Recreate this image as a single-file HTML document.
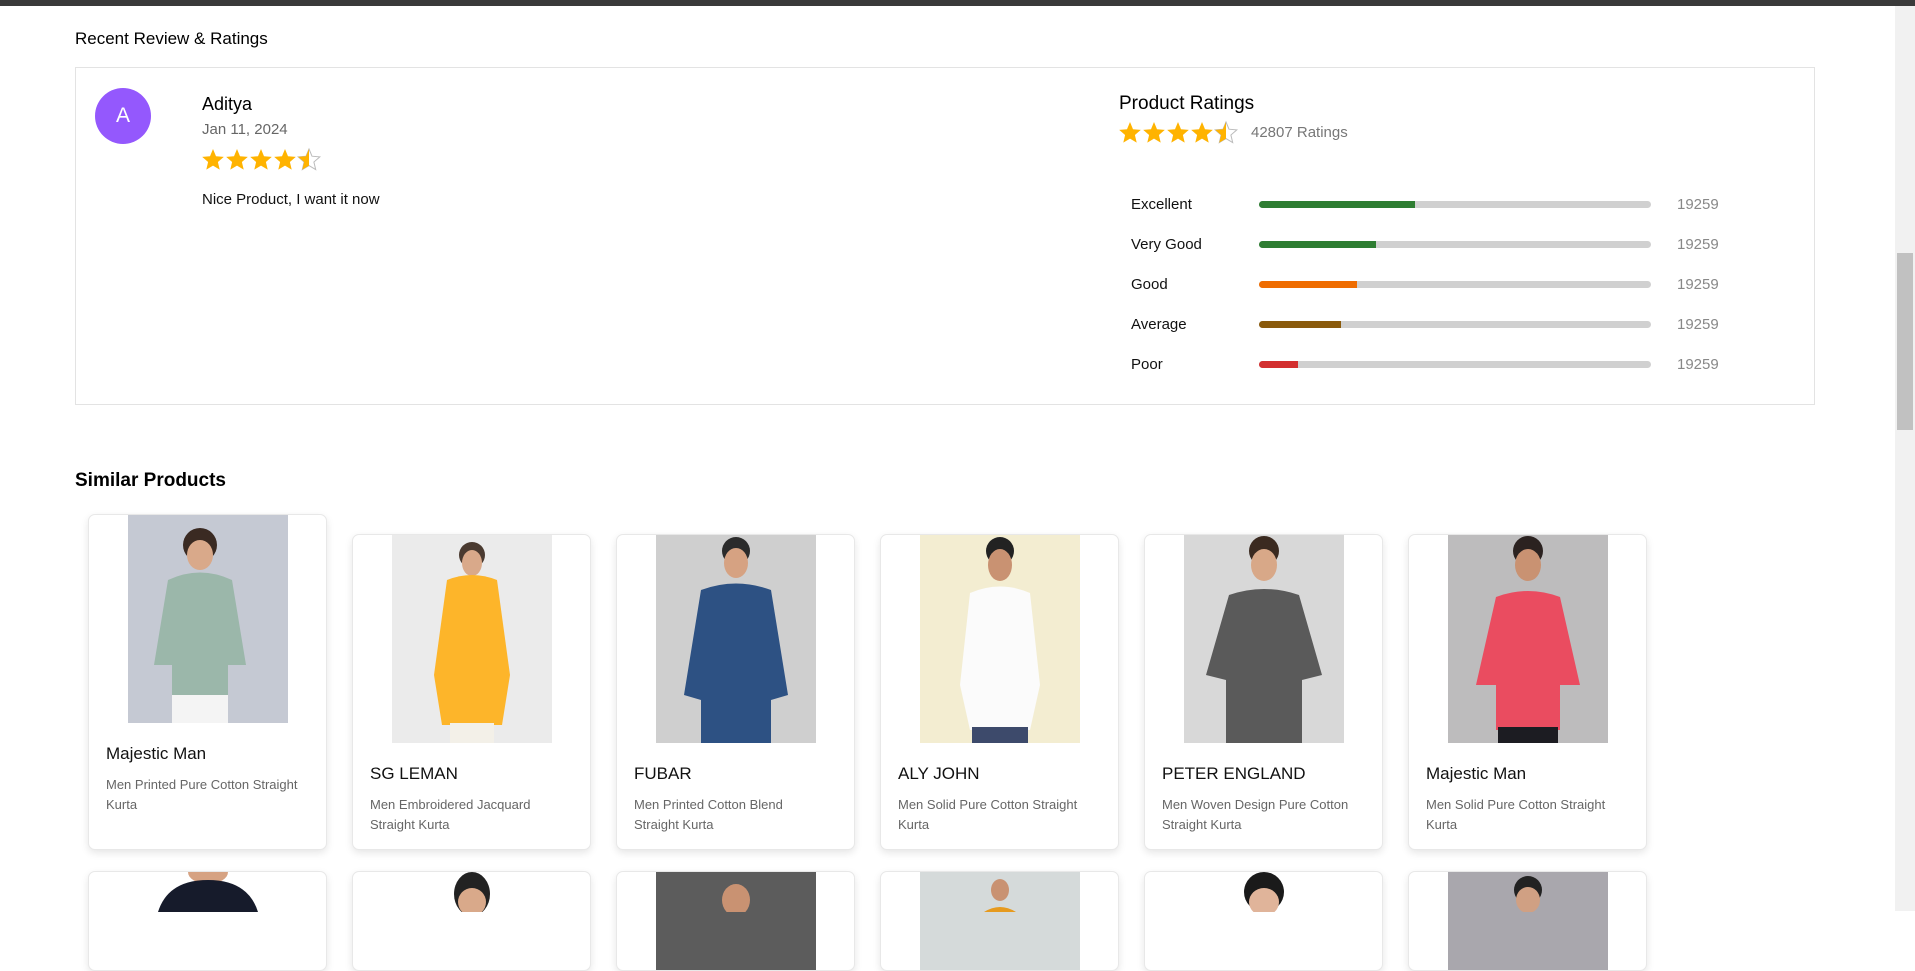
<!DOCTYPE html>
<html><head><meta charset="utf-8">
<style>
*{box-sizing:border-box;margin:0;padding:0}
html,body{width:1915px;height:911px;overflow:hidden;background:#fff;font-family:"Liberation Sans","DejaVu Sans",sans-serif;color:#111}
.topbar{position:absolute;left:0;top:0;width:1915px;height:6px;background:#3a3a3a}
.scroll{position:absolute;right:0;top:6px;width:20px;height:905px;background:#f1f1f1}
.thumb{position:absolute;right:2px;top:247px;width:16px;height:177px;background:#c1c1c1}
.abs{position:absolute;white-space:nowrap}
.box{position:absolute;left:75px;top:67px;width:1740px;height:338px;border:1px solid #e3e3e3}
.avatar{position:absolute;left:95px;top:88px;width:56px;height:56px;border-radius:50%;background:#9458fd;color:#fff;font-size:21px;display:flex;align-items:center;justify-content:center}
.bar{position:absolute;left:1259px;width:392px;height:7px;border-radius:4px;background:#d0d0d0;overflow:hidden}
.bar i{display:block;height:100%}
.lbl{position:absolute;left:1131px;font-size:15px;color:#111}
.cnt{position:absolute;left:1677px;font-size:15px;color:#888}
.card{position:absolute;width:239px;border:1px solid #e8e8e8;border-radius:7px;background:#fff;box-shadow:0 3px 8px rgba(0,0,0,.1);overflow:hidden}
.img{position:absolute;left:39px;top:0;width:160px;height:208px;overflow:hidden}
.brand{position:absolute;left:17px;font-size:17px;color:#111}
.desc{position:absolute;left:17px;width:225px;font-size:13px;line-height:20px;color:#666;white-space:nowrap}
</style></head><body>
<div class="topbar"></div>
<div class="scroll"><div class="thumb"></div></div>

<div class="abs" style="left:75px;top:29px;font-size:17px;color:#000">Recent Review &amp; Ratings</div>
<div class="box"></div>
<div class="avatar">A</div>
<div class="abs" style="left:202px;top:94px;font-size:18px;color:#000">Aditya</div>
<div class="abs" style="left:202px;top:121px;font-size:15px;color:#666">Jan 11, 2024</div>
<div class="abs" style="left:202px;top:147px;">
<svg width="120" height="26" viewBox="0 0 120 26">
<defs><path id="s" d="M11 1l3 7.2 7.8.7-5.9 5.1 1.8 7.6L11 17.6 4.3 21.6 6.1 14 .2 8.9 8 8.2z"/>
<clipPath id="h"><rect x="0" y="0" width="11" height="26"/></clipPath></defs>
<use href="#s" x="0" y="1" fill="#ffb300"/><use href="#s" x="24" y="1" fill="#ffb300"/><use href="#s" x="48" y="1" fill="#ffb300"/><use href="#s" x="72" y="1" fill="#ffb300"/>
<g transform="translate(96,1)"><use href="#s" fill="none" stroke="#bbb" stroke-width="1"/><use href="#s" fill="#ffb300" clip-path="url(#h)"/></g>
</svg></div>
<div class="abs" style="left:202px;top:191px;font-size:15px;">Nice Product, I want it now</div>

<div class="abs" style="left:1119px;top:93px;font-size:19px;color:#000">Product Ratings</div>
<div class="abs" style="left:1119px;top:120px;">
<svg width="120" height="26" viewBox="0 0 120 26">
<use href="#s" x="0" y="1" fill="#ffb300"/><use href="#s" x="24" y="1" fill="#ffb300"/><use href="#s" x="48" y="1" fill="#ffb300"/><use href="#s" x="72" y="1" fill="#ffb300"/>
<g transform="translate(96,1)"><use href="#s" fill="none" stroke="#bbb" stroke-width="1"/><use href="#s" fill="#ffb300" clip-path="url(#h)"/></g>
</svg></div>
<div class="abs" style="left:1251px;top:124px;font-size:15px;color:#777">42807 Ratings</div>

<div class="lbl" style="top:196px">Excellent</div><div class="bar" style="top:201px"><i style="width:156px;background:#2e7d32"></i></div><div class="cnt" style="top:196px">19259</div>
<div class="lbl" style="top:236px">Very Good</div><div class="bar" style="top:241px"><i style="width:117px;background:#2e7d32"></i></div><div class="cnt" style="top:236px">19259</div>
<div class="lbl" style="top:276px">Good</div><div class="bar" style="top:281px"><i style="width:98px;background:#ef6c00"></i></div><div class="cnt" style="top:276px">19259</div>
<div class="lbl" style="top:316px">Average</div><div class="bar" style="top:321px"><i style="width:82px;background:#8a5a0b"></i></div><div class="cnt" style="top:316px">19259</div>
<div class="lbl" style="top:356px">Poor</div><div class="bar" style="top:361px"><i style="width:39px;background:#d32f2f"></i></div><div class="cnt" style="top:356px">19259</div>

<div class="abs" style="left:75px;top:470px;font-size:19px;font-weight:bold;color:#000">Similar Products</div>

<!-- row 1 -->
<div class="card" style="left:88px;top:514px;height:336px">
 <div class="img" style="background:#c5c9d3"><svg width="160" height="208"><circle cx="72" cy="30" r="17" fill="#3a2a22"/><ellipse cx="72" cy="40" rx="13" ry="15" fill="#d9a98a"/><path d="M40 65 Q72 50 104 65 L118 150 L100 150 L100 185 L44 185 L44 150 L26 150Z" fill="#9bb7aa"/><rect x="44" y="180" width="56" height="28" fill="#f4f4f4"/></svg></div>
 <div class="brand" style="top:229px">Majestic Man</div>
 <div class="desc" style="top:260px">Men Printed Pure Cotton Straight<br>Kurta</div>
</div>
<div class="card" style="left:352px;top:534px;height:316px">
 <div class="img" style="background:#ebebeb"><svg width="160" height="208"><circle cx="80" cy="20" r="13" fill="#4a3a30"/><ellipse cx="80" cy="28" rx="10" ry="13" fill="#d9a98a"/><path d="M55 45 Q80 35 105 45 L118 140 L110 190 L50 190 L42 140Z" fill="#fdb52a"/><rect x="58" y="188" width="44" height="20" fill="#f3f0e8"/></svg></div>
 <div class="brand" style="top:229px">SG LEMAN</div>
 <div class="desc" style="top:260px">Men Embroidered Jacquard<br>Straight Kurta</div>
</div>
<div class="card" style="left:616px;top:534px;height:316px">
 <div class="img" style="background:#cfcfcf"><svg width="160" height="208"><circle cx="80" cy="16" r="14" fill="#2b2b2b"/><ellipse cx="80" cy="28" rx="12" ry="15" fill="#d6a282"/><path d="M45 55 Q80 42 115 55 L132 160 L115 165 L115 208 L45 208 L45 165 L28 160Z" fill="#2d5183"/></svg></div>
 <div class="brand" style="top:229px">FUBAR</div>
 <div class="desc" style="top:260px">Men Printed Cotton Blend<br>Straight Kurta</div>
</div>
<div class="card" style="left:880px;top:534px;height:316px">
 <div class="img" style="background:#f3edd1"><svg width="160" height="208"><circle cx="80" cy="16" r="14" fill="#222"/><ellipse cx="80" cy="30" rx="12" ry="16" fill="#c99272"/><path d="M50 58 Q80 45 110 58 L120 150 L110 195 L50 195 L40 150Z" fill="#fbfbfb"/><rect x="52" y="192" width="56" height="16" fill="#3d4a6b"/></svg></div>
 <div class="brand" style="top:229px">ALY JOHN</div>
 <div class="desc" style="top:260px">Men Solid Pure Cotton Straight<br>Kurta</div>
</div>
<div class="card" style="left:1144px;top:534px;height:316px">
 <div class="img" style="background:#d8d8d8"><svg width="160" height="208"><circle cx="80" cy="16" r="15" fill="#3b2a20"/><ellipse cx="80" cy="30" rx="13" ry="16" fill="#d8a888"/><path d="M45 60 Q80 48 115 60 L138 140 L118 145 L118 208 L42 208 L42 145 L22 140Z" fill="#5a5a5a"/></svg></div>
 <div class="brand" style="top:229px">PETER ENGLAND</div>
 <div class="desc" style="top:260px">Men Woven Design Pure Cotton<br>Straight Kurta</div>
</div>
<div class="card" style="left:1408px;top:534px;height:316px">
 <div class="img" style="background:#bdbcbd"><svg width="160" height="208"><circle cx="80" cy="16" r="15" fill="#2b2220"/><ellipse cx="80" cy="30" rx="13" ry="16" fill="#c99272"/><path d="M48 62 Q80 50 112 62 L132 150 L112 150 L112 195 L48 195 L48 150 L28 150Z" fill="#ea4c60"/><rect x="50" y="192" width="60" height="16" fill="#1c1c22"/></svg></div>
 <div class="brand" style="top:229px">Majestic Man</div>
 <div class="desc" style="top:260px">Men Solid Pure Cotton Straight<br>Kurta</div>
</div>

<!-- row 2 partial -->
<div class="card" style="left:88px;top:871px;height:100px"><div class="img" style="background:#fff"><svg width="160" height="40"><ellipse cx="80" cy="0" rx="20" ry="12" fill="#d6a282"/><path d="M30 40 Q40 8 80 8 Q120 8 130 40Z" fill="#161b2b"/></svg></div></div>
<div class="card" style="left:352px;top:871px;height:100px"><div class="img" style="background:#fff"><svg width="160" height="40"><ellipse cx="80" cy="22" rx="18" ry="22" fill="#222"/><ellipse cx="80" cy="30" rx="14" ry="14" fill="#d9a98a"/></svg></div></div>
<div class="card" style="left:616px;top:871px;height:100px"><div class="img" style="background:#5c5c5c"><svg width="160" height="40"><ellipse cx="80" cy="28" rx="14" ry="16" fill="#c99272"/></svg></div></div>
<div class="card" style="left:880px;top:871px;height:100px"><div class="img" style="background:#d5dada"><svg width="160" height="40"><ellipse cx="80" cy="18" rx="9" ry="11" fill="#c99272"/><path d="M64 40 Q80 30 96 40Z" fill="#e69a1e"/></svg></div></div>
<div class="card" style="left:1144px;top:871px;height:100px"><div class="img" style="background:#fff"><svg width="160" height="40"><ellipse cx="80" cy="20" rx="20" ry="20" fill="#1a1a1a"/><ellipse cx="80" cy="30" rx="15" ry="14" fill="#e0b49a"/></svg></div></div>
<div class="card" style="left:1408px;top:871px;height:100px"><div class="img" style="background:#a9a7ad"><svg width="160" height="40"><ellipse cx="80" cy="18" rx="14" ry="14" fill="#222"/><ellipse cx="80" cy="28" rx="12" ry="13" fill="#d0a083"/></svg></div></div>
</body></html>
